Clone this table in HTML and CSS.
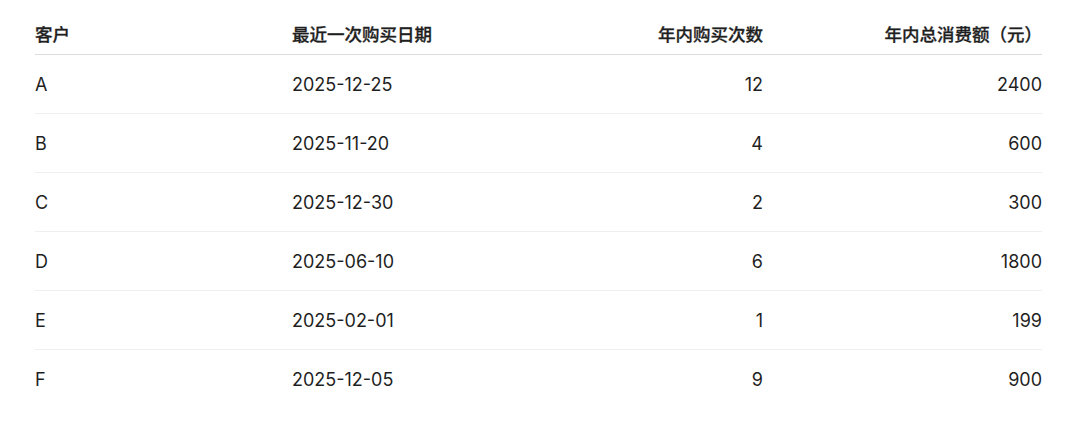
FILE: index.html
```html
<!DOCTYPE html>
<html lang="zh-CN">
<head>
<meta charset="utf-8">
<title>客户购买统计</title>
<link rel="stylesheet" href="styles.css">
</head>
<body>
<div class="wrap">
<table class="data">
  <colgroup>
    <col class="c1"><col class="c2"><col class="c3"><col class="c4">
  </colgroup>
  <thead>
    <tr><th>客户</th><th>最近一次购买日期</th><th class="num">年内购买次数</th><th class="num">年内总消费额（元）</th></tr>
  </thead>
  <tbody>
    <tr><td>A</td><td>2025-12-25</td><td class="num">12</td><td class="num">2400</td></tr>
    <tr><td>B</td><td>2025-11-20</td><td class="num">4</td><td class="num">600</td></tr>
    <tr><td>C</td><td>2025-12-30</td><td class="num">2</td><td class="num">300</td></tr>
    <tr><td>D</td><td>2025-06-10</td><td class="num">6</td><td class="num">1800</td></tr>
    <tr><td>E</td><td>2025-02-01</td><td class="num">1</td><td class="num">199</td></tr>
    <tr><td>F</td><td>2025-12-05</td><td class="num">9</td><td class="num">900</td></tr>
  </tbody>
</table>
</div>
</body>
</html>
```

FILE: styles.css
```css
html, body {
  margin: 0;
  padding: 0;
  background: #ffffff;
}
body {
  font-family: Inter, "Noto Sans CJK SC", sans-serif;
  font-size: 17.5px;
  color: #1f1f1f;
}
.wrap {
  padding: 13px 38px 0 35px;
}
.data {
  width: 100%;
  border-collapse: collapse;
  table-layout: fixed;
}
.c1 { width: 249px; }
.c2 { width: 243px; }
.c3 { width: 244px; }
.c4 { width: auto; }
.data th, .data td {
  padding: 0 8px;
  text-align: left;
  vertical-align: middle;
}
.data th:first-child, .data td:first-child { padding-left: 0; }
.data th:last-child, .data td:last-child { padding-right: 0; }
.data th {
  font-weight: 500;
  -webkit-text-stroke: 0.3px currentColor;
  height: 41px;
  border-bottom: 1px solid #dcdcdc;
}
.data td {
  height: 58px;
  font-size: 18px;
  font-weight: 400;
  border-bottom: 1px solid #efefef;
}
.data tbody tr:last-child td { border-bottom: none; }
.data .num { text-align: right; }
```
